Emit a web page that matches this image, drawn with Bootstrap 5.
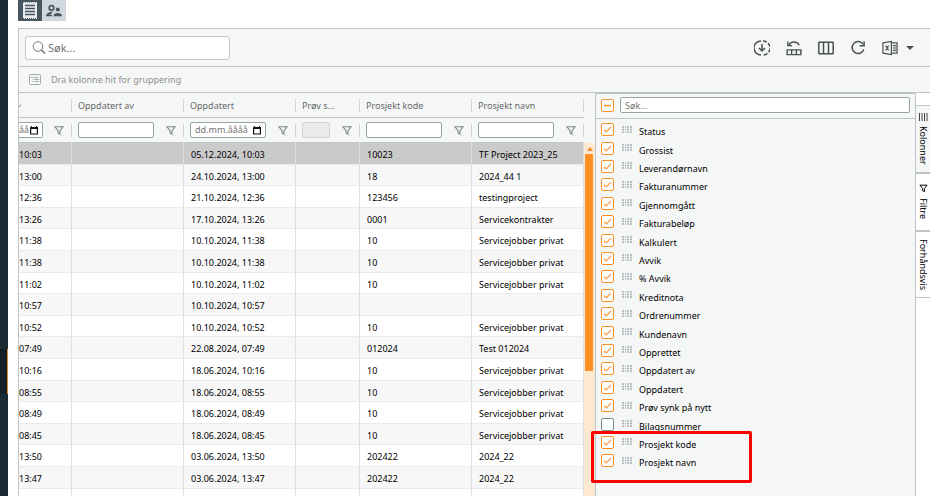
<!DOCTYPE html>
<html lang="nb">
<head>
<meta charset="utf-8">
<meta name="viewport" content="width=device-width, initial-scale=1">
<title>Prosjekter</title>
<link href="https://cdn.jsdelivr.net/npm/bootstrap@5.3.0/dist/css/bootstrap.min.css" rel="stylesheet">
<style>
:root{--line:#bdc3c7;--soft:#dde0e2;--panel:#f5f7f7;--head:#66696a;--field:#95a5a6;--accent:#ff8f24}
body{font-family:"Noto Sans","Open Sans",sans-serif;font-size:9px;line-height:12px;color:#000;background:#fff}
.rail{width:8px;background:#1a2b34;padding-top:349px}
.rail-active{height:45px;background:#142027;border-right:1px solid #d98b3a}
.main{margin-left:10px}
.view-btn{width:24px;height:21px;padding:0;border:0;background:#d0d7de;color:#47545e}
.view-btn.on{background:#47565f;color:#f2f4f5}
.grid-shell{margin-top:7px;border:1px solid var(--line);border-right:0;border-bottom:0;background:var(--panel)}
.tools{height:38px;padding:0 16px 0 6px;border-bottom:1px solid var(--line)}
.quick{width:205px;height:24px;border:1px solid #c4c8cb;border-radius:3px;background:#fff;color:#777;padding-left:6px;gap:2px}
.quick input{font-size:11px;line-height:16px;color:#555;outline:0}
input::placeholder{color:#757575;opacity:1}
.tool-btn{padding:0;border:0;background:none;color:#4d5051;line-height:0}
.group-bar{height:26px;border-bottom:1px solid var(--line);color:#8f8f8f;padding-left:10px;gap:10px}
.grid-table{table-layout:fixed;border-collapse:separate;border-spacing:0}
.grid-table th,.grid-table td{padding:0 0 0 6px;overflow:hidden;white-space:nowrap;vertical-align:middle}
.grid-table thead tr{height:25px}
.grid-table thead th,.grid-table thead td{border-bottom:1px solid var(--line);color:var(--head);font-weight:400;background:var(--panel)}
.cellhead{height:13px;border-right:1px solid #cfd3d6;padding-right:7px;line-height:13px}
.grid-table tbody tr{height:22px}
.grid-table tbody tr:nth-child(5n+2),.grid-table tbody tr:nth-child(5n+4){height:21px}
.grid-table tbody td{border-right:1px solid var(--soft);border-bottom:1px solid #e9eaea;background:#fff;padding:3px 0 0 7px}
.grid-table tbody tr:nth-child(even) td{background:#f7f7f7}
.grid-table tbody tr.picked td{background:#cacaca}
.grid-table tr > :first-child,.grid-table tbody tr > :first-child{padding-left:0}
.inp{border:1px solid var(--field);border-radius:2px;background:#fff;height:16px;min-width:0;color:#757575}
.inp input,.inp-plain{font-size:9px;line-height:12px;outline:0}
.inp-plain{padding:0 4px}
.inp-plain:disabled{background:#ebebeb;border-color:#d0d4d4}
.inp-first{border-left:0;border-radius:0 2px 2px 0;width:24px}
.fbtn{padding:0;border:0;background:none;color:#7f8588;line-height:0}
.vscroll{width:11px;border-top:50px solid var(--panel);background:#fde8d0;padding:4px 1px 0 1px}
.thumb{height:217px;width:8px;background:var(--accent);margin-top:3px}
.columns{width:320px;border-left:1px solid var(--line);border-top:1px solid var(--line);background:var(--panel)}
.columns-head{height:25px;border-bottom:1px solid var(--line);padding:0 5px 2px 5px;gap:6px}
.columns-list{padding-top:1px}
.col-item{height:18px;padding-left:5px}
.col-item:nth-child(5n+1),.col-item:nth-child(5n+4){height:19px}
.tick{appearance:none;width:13px;height:13px;margin:0;border:1px solid #7f8c8d;border-radius:2px;background:#fff center/11px 11px no-repeat;flex:none}
.tick:checked{border-color:var(--accent);background-image:url("data:image/svg+xml,%3Csvg xmlns='http://www.w3.org/2000/svg' viewBox='0 0 11 11'%3E%3Cpath d='M2 5.8 4.3 8 9 3' fill='none' stroke='%23ff9c45' stroke-width='1.2'/%3E%3C/svg%3E")}
.tick.some:checked{background-image:url("data:image/svg+xml,%3Csvg xmlns='http://www.w3.org/2000/svg' viewBox='0 0 11 11'%3E%3Cpath d='M2 5.5h7' stroke='%23ff8f24' stroke-width='1.4'/%3E%3C/svg%3E")}
.grip{margin:0 7px 0 8px;color:#a9b0b5}
.col-item label{padding-top:5px}
.tabs{width:15px;border-left:1px solid var(--line);background:#fff;padding-top:12px}
.tab-btn{writing-mode:vertical-rl;border:0;border-bottom:2px solid var(--line);padding:0;background:#fff;font-size:9px;line-height:14px;color:#000;gap:5px}
.tab-btn.on{background:var(--panel);border-top:1px solid var(--line);height:69px}
.tab-filter{height:58px}.tab-preview{height:66px;border-bottom-width:1px}
.callout{left:-5px;top:337px;width:161px;height:52px;border:3px solid #f00;border-radius:2px;pointer-events:none}
</style>
<script src="https://cdn.jsdelivr.net/npm/bootstrap@5.3.0/dist/js/bootstrap.bundle.min.js"></script>
</head>
<body class="vh-100 overflow-hidden">
<svg class="d-none" xmlns="http://www.w3.org/2000/svg">
<symbol id="funnel" viewBox="0 0 10 9"><path d="M1 .8h8L6 4.600V8L4 7V4.600z" fill="none" stroke="currentColor" stroke-width="1.1"/></symbol>
<symbol id="cal" viewBox="0 0 8 9"><path d="M.6 1.600h6.800v6.400H.6z" fill="none" stroke="#111" stroke-width="1.200"/><path d="M0 1h8v2H0zM1 0h1v1H1zM6 0h1v1H6z" fill="#111"/></symbol>
<symbol id="dots" viewBox="0 0 10 8"><path d="M0 1h2M3 1h1M5 1h2M8 1h2M0 3.500h2M3 3.500h1M5 3.500h2M8 3.500h2M0 6h2M3 6h1M5 6h2M8 6h2" stroke="currentColor" stroke-width="1.500"/></symbol>
</svg>
<div class="d-flex h-100">
<aside class="rail flex-shrink-0"><div class="rail-active"></div></aside>
<main class="main flex-grow-1 d-flex flex-column overflow-hidden">
<nav class="d-flex" aria-label="Visning">
<button class="view-btn on" aria-label="Fakturaer"><svg width="18" height="19" viewBox="0 0 18 19"><path d="M2 1h14v17H2z" fill="#e9edf0"/><path d="M2 1h14M2 17.500h14" stroke="#47565f" stroke-dasharray="1 1"/><path d="M4 4.500h10M4 7.500h10M4 10.500h10M4 13.500h10" stroke="#47545e" stroke-width="1.300"/></svg></button>
<button class="view-btn" aria-label="Personer"><svg width="18" height="14" viewBox="0 0 18 14"><circle cx="6.500" cy="4" r="2.300" fill="none" stroke="currentColor" stroke-width="1.700"/><circle cx="12.800" cy="5.500" r="2" fill="currentColor"/><path d="M1 12.200c0-3 3-4.200 6.500-4.200L6 10.200 4 11h3v1.200zM8.500 12.200c0-2.200 2-3.200 4.200-3.200s4.300 1 4.300 3.200z" fill="currentColor"/></svg></button>
</nav>
<section class="grid-shell flex-grow-1 d-flex flex-column overflow-hidden">
<div class="tools d-flex align-items-center flex-shrink-0">
<label class="quick d-flex align-items-center"><svg width="14" height="14" viewBox="0 0 14 14"><circle cx="6" cy="5.500" r="4.800" fill="none" stroke="currentColor"/><path d="m9.500 9 3.500 3.500" stroke="currentColor" stroke-width="1.700"/></svg><input class="border-0 p-0 flex-grow-1 bg-transparent" type="search" placeholder="Søk..." aria-label="Søk"></label>
<div class="ms-auto d-flex align-items-center gap-3">
<button class="tool-btn" aria-label="Last ned"><svg width="16" height="16" viewBox="0 0 16 16" fill="none" stroke="currentColor" stroke-width="1.500"><path d="M7 1a7 7 0 0 0 0 14"/><path d="M9 1a7 7 0 0 1 0 14" stroke-dasharray="4 1.700"/><path d="M8 4v7M5 8l3 3 3-3"/></svg></button>
<button class="tool-btn" aria-label="Tilbakestill kolonner"><svg width="16" height="16" viewBox="0 0 17 16" fill="none" stroke="currentColor" stroke-width="1.500"><path d="M1.200 10h14.600v5H1.200zM6 10v5M11 10v5M3 5.500c2-5 9-5 11-.5"/><path d="M2 1v4.500h4.500"/></svg></button>
<button class="tool-btn" aria-label="Kolonner"><svg width="16" height="14" viewBox="0 0 16 14" fill="none" stroke="currentColor" stroke-width="1.500"><rect x=".8" y="1.300" width="14.400" height="11.400" rx=".5"/><path d="M5.500 1v12M10.500 1v12"/></svg></button>
<button class="tool-btn" aria-label="Oppdater"><svg width="16" height="16" viewBox="0 0 16 16" fill="none" stroke="currentColor" stroke-width="1.500"><path d="M13.800 9.500a6 6 0 1 1-.7-5.300"/><path d="M14.100 1.200v4.600H9.500"/></svg></button>
<button class="tool-btn d-flex align-items-center gap-2" aria-label="Eksporter til Excel"><svg width="16" height="16" viewBox="0 0 17 16" fill="none" stroke="currentColor" stroke-width="1.300"><path d="M1 2.500 10 1v14L1 13.500zM10 2.500h6v11h-6M4 5.500l3 5M7 5.500l-3 5M11.500 5.500H15M11.500 8H15M11.500 10.500H15"/></svg><svg width="8" height="4" viewBox="0 0 8 4"><path d="M0 0h8L4 4z" fill="currentColor"/></svg></button>
</div>
</div>
<div class="group-bar d-flex align-items-center flex-shrink-0"><svg width="12" height="11" viewBox="0 0 12 11" fill="none" stroke="#a4a9ac"><rect x=".5" y=".5" width="11" height="10" rx="1"/><path d="M2 3.500h2M3.500 5.500h1M3.500 7.500h1M5 3.500h4M5.500 5.500H10M5.500 7.500H10"/></svg><span>Dra kolonne hit for gruppering</span></div>
<div class="flex-grow-1 d-flex overflow-hidden">
<div class="flex-grow-1 overflow-hidden">
<table class="grid-table w-100">
<colgroup><col style="width:53px"><col style="width:112px"><col style="width:112px"><col style="width:64px"><col style="width:112px"><col></colgroup>
<thead>
<tr><th scope="col"><div class="cellhead"><svg width="4" height="4" viewBox="0 0 4 4"><path d="M0 3 2 .5" stroke="#888"/></svg></div></th><th scope="col"><div class="cellhead">Oppdatert av</div></th><th scope="col"><div class="cellhead">Oppdatert</div></th><th scope="col"><div class="cellhead">Prøv s...</div></th><th scope="col"><div class="cellhead">Prosjekt kode</div></th><th scope="col"><div class="cellhead">Prosjekt navn</div></th></tr>
<tr>
<td><div class="cellhead d-flex align-items-center justify-content-between"><label class="inp inp-first d-flex align-items-center"><input class="border-0 p-0 flex-grow-1 w-50 bg-transparent" placeholder="åå" aria-label="Opprettet"><svg width="8" height="9" class="flex-shrink-0 me-1"><use href="#cal"/></svg></label><button class="fbtn" aria-label="Filter"><svg width="10" height="9"><use href="#funnel"/></svg></button></div></td>
<td><div class="cellhead d-flex align-items-center"><input class="inp inp-plain flex-grow-1" aria-label="Oppdatert av"><button class="fbtn ms-2 ps-1" aria-label="Filter"><svg width="10" height="9"><use href="#funnel"/></svg></button></div></td>
<td><div class="cellhead d-flex align-items-center"><label class="inp flex-grow-1 d-flex align-items-center ps-1"><input class="border-0 p-0 w-100 bg-transparent" placeholder="dd.mm.åååå" aria-label="Oppdatert"><svg width="8" height="9" class="flex-shrink-0 me-1"><use href="#cal"/></svg></label><button class="fbtn ms-2 ps-1" aria-label="Filter"><svg width="10" height="9"><use href="#funnel"/></svg></button></div></td>
<td><div class="cellhead d-flex align-items-center"><input class="inp inp-plain flex-grow-1" disabled aria-label="Prøv synk"><button class="fbtn ms-2 ps-1" aria-label="Filter"><svg width="10" height="9"><use href="#funnel"/></svg></button></div></td>
<td><div class="cellhead d-flex align-items-center"><input class="inp inp-plain flex-grow-1" aria-label="Prosjekt kode"><button class="fbtn ms-2 ps-1" aria-label="Filter"><svg width="10" height="9"><use href="#funnel"/></svg></button></div></td>
<td><div class="cellhead d-flex align-items-center"><input class="inp inp-plain flex-grow-1" aria-label="Prosjekt navn"><button class="fbtn ms-2 ps-1" aria-label="Filter"><svg width="10" height="9"><use href="#funnel"/></svg></button></div></td>
</tr>
</thead>
<tbody>
<tr class="picked"><td>10:03</td><td></td><td>05.12.2024, 10:03</td><td></td><td>10023</td><td>TF Project 2023_25</td></tr>
<tr><td>13:00</td><td></td><td>24.10.2024, 13:00</td><td></td><td>18</td><td>2024_44 1</td></tr>
<tr><td>12:36</td><td></td><td>21.10.2024, 12:36</td><td></td><td>123456</td><td>testingproject</td></tr>
<tr><td>13:26</td><td></td><td>17.10.2024, 13:26</td><td></td><td>0001</td><td>Servicekontrakter</td></tr>
<tr><td>11:38</td><td></td><td>10.10.2024, 11:38</td><td></td><td>10</td><td>Servicejobber privat</td></tr>
<tr><td>11:38</td><td></td><td>10.10.2024, 11:38</td><td></td><td>10</td><td>Servicejobber privat</td></tr>
<tr><td>11:02</td><td></td><td>10.10.2024, 11:02</td><td></td><td>10</td><td>Servicejobber privat</td></tr>
<tr><td>10:57</td><td></td><td>10.10.2024, 10:57</td><td></td><td></td><td></td></tr>
<tr><td>10:52</td><td></td><td>10.10.2024, 10:52</td><td></td><td>10</td><td>Servicejobber privat</td></tr>
<tr><td>07:49</td><td></td><td>22.08.2024, 07:49</td><td></td><td>012024</td><td>Test 012024</td></tr>
<tr><td>10:16</td><td></td><td>18.06.2024, 10:16</td><td></td><td>10</td><td>Servicejobber privat</td></tr>
<tr><td>08:55</td><td></td><td>18.06.2024, 08:55</td><td></td><td>10</td><td>Servicejobber privat</td></tr>
<tr><td>08:49</td><td></td><td>18.06.2024, 08:49</td><td></td><td>10</td><td>Servicejobber privat</td></tr>
<tr><td>08:45</td><td></td><td>18.06.2024, 08:45</td><td></td><td>10</td><td>Servicejobber privat</td></tr>
<tr><td>13:50</td><td></td><td>03.06.2024, 13:50</td><td></td><td>202422</td><td>2024_22</td></tr>
<tr><td>13:47</td><td></td><td>03.06.2024, 13:47</td><td></td><td>202422</td><td>2024_22</td></tr>
<tr><td></td><td></td><td></td><td></td><td></td><td></td></tr>
</tbody>
</table>
</div>
<div class="vscroll flex-shrink-0" aria-hidden="true"><svg class="d-block ms-auto me-auto" width="6" height="4" viewBox="0 0 6 4"><path d="M0 4h6L3 0z" fill="#f08a2a"/></svg><div class="thumb"></div></div>
<section class="columns flex-shrink-0 position-relative" aria-label="Kolonner">
<div class="columns-head d-flex align-items-center"><input class="tick some" type="checkbox" checked aria-label="Velg alle"><input class="inp inp-plain flex-grow-1" type="search" placeholder="Søk..." aria-label="Søk kolonner"></div>
<div class="columns-list">
<div class="col-item d-flex align-items-center"><input class="tick" type="checkbox" id="c1" checked><svg class="grip" width="10" height="8"><use href="#dots"/></svg><label for="c1">Status</label></div>
<div class="col-item d-flex align-items-center"><input class="tick" type="checkbox" id="c2" checked><svg class="grip" width="10" height="8"><use href="#dots"/></svg><label for="c2">Grossist</label></div>
<div class="col-item d-flex align-items-center"><input class="tick" type="checkbox" id="c3" checked><svg class="grip" width="10" height="8"><use href="#dots"/></svg><label for="c3">Leverandørnavn</label></div>
<div class="col-item d-flex align-items-center"><input class="tick" type="checkbox" id="c4" checked><svg class="grip" width="10" height="8"><use href="#dots"/></svg><label for="c4">Fakturanummer</label></div>
<div class="col-item d-flex align-items-center"><input class="tick" type="checkbox" id="c5" checked><svg class="grip" width="10" height="8"><use href="#dots"/></svg><label for="c5">Gjennomgått</label></div>
<div class="col-item d-flex align-items-center"><input class="tick" type="checkbox" id="c6" checked><svg class="grip" width="10" height="8"><use href="#dots"/></svg><label for="c6">Fakturabeløp</label></div>
<div class="col-item d-flex align-items-center"><input class="tick" type="checkbox" id="c7" checked><svg class="grip" width="10" height="8"><use href="#dots"/></svg><label for="c7">Kalkulert</label></div>
<div class="col-item d-flex align-items-center"><input class="tick" type="checkbox" id="c8" checked><svg class="grip" width="10" height="8"><use href="#dots"/></svg><label for="c8">Avvik</label></div>
<div class="col-item d-flex align-items-center"><input class="tick" type="checkbox" id="c9" checked><svg class="grip" width="10" height="8"><use href="#dots"/></svg><label for="c9">% Avvik</label></div>
<div class="col-item d-flex align-items-center"><input class="tick" type="checkbox" id="c10" checked><svg class="grip" width="10" height="8"><use href="#dots"/></svg><label for="c10">Kreditnota</label></div>
<div class="col-item d-flex align-items-center"><input class="tick" type="checkbox" id="c11" checked><svg class="grip" width="10" height="8"><use href="#dots"/></svg><label for="c11">Ordrenummer</label></div>
<div class="col-item d-flex align-items-center"><input class="tick" type="checkbox" id="c12" checked><svg class="grip" width="10" height="8"><use href="#dots"/></svg><label for="c12">Kundenavn</label></div>
<div class="col-item d-flex align-items-center"><input class="tick" type="checkbox" id="c13" checked><svg class="grip" width="10" height="8"><use href="#dots"/></svg><label for="c13">Opprettet</label></div>
<div class="col-item d-flex align-items-center"><input class="tick" type="checkbox" id="c14" checked><svg class="grip" width="10" height="8"><use href="#dots"/></svg><label for="c14">Oppdatert av</label></div>
<div class="col-item d-flex align-items-center"><input class="tick" type="checkbox" id="c15" checked><svg class="grip" width="10" height="8"><use href="#dots"/></svg><label for="c15">Oppdatert</label></div>
<div class="col-item d-flex align-items-center"><input class="tick" type="checkbox" id="c16" checked><svg class="grip" width="10" height="8"><use href="#dots"/></svg><label for="c16">Prøv synk på nytt</label></div>
<div class="col-item d-flex align-items-center"><input class="tick" type="checkbox" id="c17"><svg class="grip" width="10" height="8"><use href="#dots"/></svg><label for="c17">Bilagsnummer</label></div>
<div class="col-item d-flex align-items-center"><input class="tick" type="checkbox" id="c18" checked><svg class="grip" width="10" height="8"><use href="#dots"/></svg><label for="c18">Prosjekt kode</label></div>
<div class="col-item d-flex align-items-center"><input class="tick" type="checkbox" id="c19" checked><svg class="grip" width="10" height="8"><use href="#dots"/></svg><label for="c19">Prosjekt navn</label></div>
</div>
<div class="callout position-absolute"></div>
</section>
<div class="tabs flex-shrink-0 d-flex flex-column">
<button class="tab-btn on d-flex align-items-center justify-content-center"><svg width="10" height="8" viewBox="0 0 10 8"><path d="M1.500 0v8M4 0v8M6.500 0v8M9 0v8" stroke="#444"/></svg>Kolonner</button>
<button class="tab-btn tab-filter d-flex align-items-center justify-content-center"><svg width="9" height="9"><use href="#funnel"/></svg>Filtre</button>
<button class="tab-btn tab-preview d-flex align-items-center justify-content-center">Forhåndsvis</button>
</div>
</div>
</section>
</main>
</div>
</body>
</html>
